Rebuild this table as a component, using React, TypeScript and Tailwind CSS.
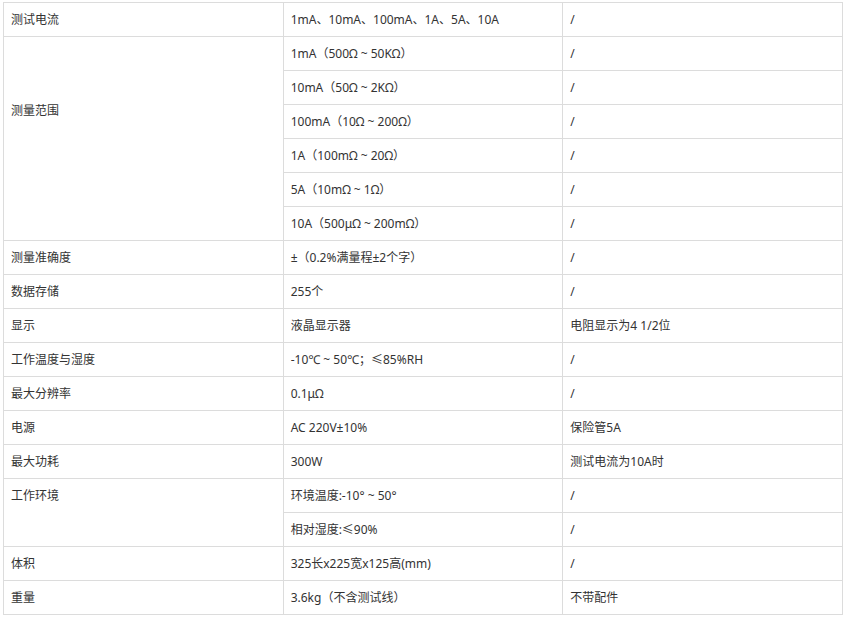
const rows: { label?: string; span?: number; value: string; note: string; labelPad?: string }[] = [
  { label: "测试电流", value: "1mA、10mA、100mA、1A、5A、10A", note: "/" },
  { label: "测量范围", span: 6, value: "1mA（500Ω ~ 50KΩ）", note: "/", labelPad: "big" },
  { value: "10mA（50Ω ~ 2KΩ）", note: "/" },
  { value: "100mA（10Ω ~ 200Ω）", note: "/" },
  { value: "1A（100mΩ ~ 20Ω）", note: "/" },
  { value: "5A（10mΩ ~ 1Ω）", note: "/" },
  { value: "10A（500μΩ ~ 200mΩ）", note: "/" },
  { label: "测量准确度", value: "±（0.2%满量程±2个字）", note: "/" },
  { label: "数据存储", value: "255个", note: "/" },
  { label: "显示", value: "液晶显示器", note: "电阻显示为4 1/2位" },
  { label: "工作温度与湿度", value: "-10℃ ~ 50℃；≤85%RH", note: "/" },
  { label: "最大分辨率", value: "0.1μΩ", note: "/" },
  { label: "电源", value: "AC 220V±10%", note: "保险管5A" },
  { label: "最大功耗", value: "300W", note: "测试电流为10A时" },
  { label: "工作环境", span: 2, value: "环境温度:-10° ~ 50°", note: "/" },
  { value: "相对湿度:≤90%", note: "/" },
  { label: "体积", value: "325长x225宽x125高(mm)", note: "/" },
  { label: "重量", value: "3.6kg（不含测试线）", note: "不带配件" },
];

const cell = "border border-[#dcdcdc] px-[7px] h-[34px] align-middle text-left font-normal";

export default function App() {
  return (
    <div className="bg-white min-h-[617px] pt-[2px] pl-[3px] text-[12px] text-[#333] leading-[18px] [font-family:'Noto_Sans','Noto_Sans_CJK_SC',sans-serif]">
      <table className="w-[840px] table-fixed border-collapse">
        <tbody>
          {rows.map((r, i) => (
            <tr key={i} className="h-[34px]">
              {r.label !== undefined && (
                <td
                  rowSpan={r.span}
                  className={
                    r.labelPad === "big"
                      ? "border border-[#dcdcdc] px-[7px] align-top pt-[65px] text-left"
                      : r.span
                      ? "border border-[#dcdcdc] px-[7px] align-top pt-[8px] text-left"
                      : cell
                  }
                >
                  {r.label}
                </td>
              )}
              <td className={cell}>{r.value}</td>
              <td className={cell}>{r.note}</td>
            </tr>
          ))}
        </tbody>
      </table>
    </div>
  );
}
